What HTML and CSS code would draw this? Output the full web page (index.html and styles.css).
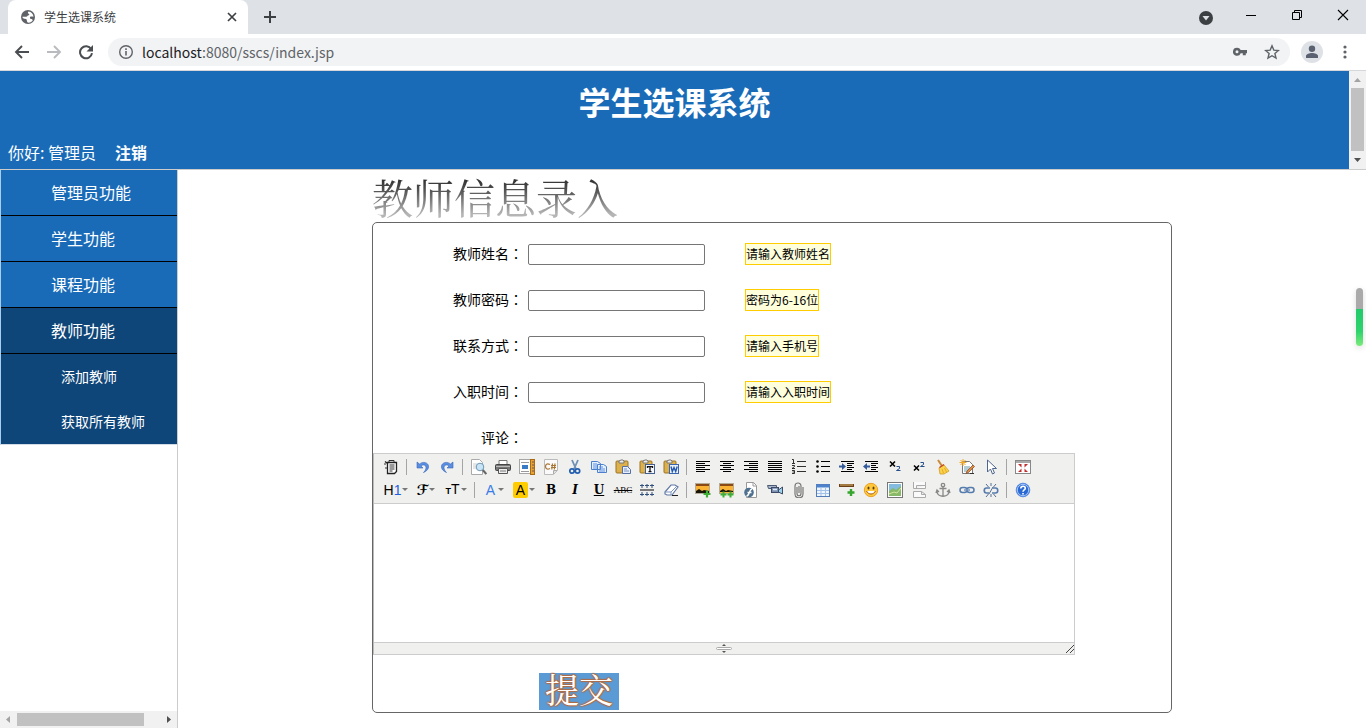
FILE: index.html
```html
<!DOCTYPE html>
<html lang="zh-CN">
<head>
<meta charset="utf-8">
<title>学生选课系统</title>
<link rel="stylesheet" href="styles.css">
</head>
<body>
<div class="tabstrip">
  <div class="tab">
    <svg class="i16" viewBox="0 0 16 16"><circle cx="8" cy="8" r="7" fill="#5f6368"/><path d="M8.500 2.500c-1 .8-.8 2 .3 2.300 1 .3.400 1.500-.8 1.700-.8.200-.6 1.300-1.700 1.300H2.400c0 1.500 1.500 2 2.600 2 1.300 0 1.900.8 1.900 1.900 0 1 .6 1.900 1.600 2 2-.1 3.300-1 4.300-2.500-.3-.9-1-1.200-1.900-1.200-1.300 0-1.200-2-.3-2.400.8-.3 1.900-.2 2.900.1-.2-2.700-2.200-4.900-5-5.200z" fill="#fff"/></svg>
    <span class="tab-title">学生选课系统</span>
    <button class="bare" aria-label="关闭标签页"><svg class="i16" viewBox="0 0 16 16"><path d="M4 4l8 8M12 4l-8 8" stroke="#3c4043" stroke-width="1.700"/></svg></button>
  </div>
  <button class="bare newtab" aria-label="新标签页"><svg class="i16" viewBox="0 0 16 16"><path d="M8 2v12M2 8h12" stroke="#3c4043" stroke-width="2"/></svg></button>
  <div class="winbtns">
    <button class="bare win" aria-label="搜索标签页"><svg class="i16" viewBox="0 0 16 16"><circle cx="9" cy="9" r="7" fill="#3c4043"/><path d="M5.500 7h7L9 11.500z" fill="#dee1e6"/></svg></button>
    <button class="bare win" aria-label="最小化"><svg class="i16" viewBox="0 0 16 16"><path d="M3 6.500h10" stroke="#000"/></svg></button>
    <button class="bare win" aria-label="还原"><svg class="i16" viewBox="0 0 16 16"><path d="M3.500 3.500h7v7h-7zM5.500 3.500v-2h7v7h-2" fill="none" stroke="#000"/></svg></button>
    <button class="bare win" aria-label="关闭"><svg class="i16" viewBox="0 0 16 16"><path d="M3 1l10 10M13 1L3 11" stroke="#000" stroke-width="1.100"/></svg></button>
  </div>
</div>
<div class="navbar">
  <button class="bare nav" aria-label="后退"><svg class="i16" viewBox="0 0 16 16"><path d="M15 8H2M8 2L2 8l6 6" fill="none" stroke="#4a4d51" stroke-width="1.900"/></svg></button>
  <button class="bare nav" aria-label="前进"><svg class="i16" viewBox="0 0 16 16"><path d="M1 8h13M8 2l6 6-6 6" fill="none" stroke="#b9bbbe" stroke-width="1.900"/></svg></button>
  <button class="bare nav" aria-label="刷新"><svg class="i16" viewBox="0 0 16 16"><path d="M13.200 5.200A6 6 0 1 0 14 9.200" fill="none" stroke="#4a4d51" stroke-width="2"/><path d="M15 1v6.500H8.500z" fill="#4a4d51"/></svg></button>
  <div class="omnibox">
    <svg class="i16" viewBox="0 0 16 16"><circle cx="8" cy="8" r="6.300" fill="none" stroke="#5f6368" stroke-width="1.400"/><path d="M8 7v4.500M8 4.300v1.600" stroke="#5f6368" stroke-width="1.600"/></svg>
    <div class="url"><span class="host">localhost</span>:8080/sscs/index.jsp</div>
    <svg class="i16" viewBox="0 0 16 16"><path fill-rule="evenodd" d="M5 3.800a4 4 0 1 0 3.700 5.400h2.100v2h3V9.200H15V6H8.700A4 4 0 0 0 5 3.800zM5 6.200a1.500 1.500 0 1 1 0 3 1.500 1.500 0 0 1 0-3z" fill="#5f6368"/></svg>
    <svg class="i16" viewBox="0 0 16 16"><path d="M8 1.800l1.800 4.300 4.600.4-3.500 3 1.100 4.600L8 11.700 4 14.100l1.100-4.600-3.500-3 4.600-.4z" fill="none" stroke="#5f6368" stroke-width="1.400"/></svg>
  </div>
  <button class="bare avatar" aria-label="用户"><svg class="i16" viewBox="0 0 16 16"><circle cx="8" cy="4.800" r="3.200" fill="#5a6170"/><path d="M2 14v-2c0-2 3.500-3 6-3s6 1 6 3v2z" fill="#5a6170"/></svg></button>
  <button class="bare" aria-label="菜单"><svg class="i16" viewBox="0 0 16 16"><g fill="#5f6368"><circle cx="8" cy="3" r="1.600"/><circle cx="8" cy="8" r="1.600"/><circle cx="8" cy="13" r="1.600"/></g></svg></button>
</div>

<div class="topframe">
  <header class="banner">
    <h1>学生选课系统</h1>
    <p>你好: 管理员<a href="#">注销</a></p>
  </header>
  <div class="vscroll">
    <svg class="arrow" viewBox="0 0 17 17"><path d="M5 11h7L8.500 7z" fill="#a3a3a3"/></svg>
    <div class="vthumb"></div>
    <svg class="arrow" viewBox="0 0 17 17"><path d="M5 7h7l-3.500 4z" fill="#505050"/></svg>
  </div>
</div>

<div class="frames">
  <aside class="side">
    <nav class="menu">
      <a href="#">管理员功能</a>
      <a href="#">学生功能</a>
      <a href="#">课程功能</a>
      <a href="#" class="open">教师功能</a>
      <a href="#" class="sub">添加教师</a>
      <a href="#" class="sub">获取所有教师</a>
    </nav>
    <div class="hscroll">
      <svg class="arrow" viewBox="0 0 17 17"><path d="M10 5v7L6 8.500z" fill="#a3a3a3"/></svg>
      <div class="hthumb"></div>
      <svg class="arrow" viewBox="0 0 17 17"><path d="M7 5v7l4-3.500z" fill="#505050"/></svg>
    </div>
  </aside>

  <main class="content">
    <form class="sheet">
      <h2>教师信息录入</h2>
      <div class="box">
        <div class="row"><label for="name">教师姓名<span class="colon" lang="zh-TW">：</span></label><input id="name" type="text"><span class="hint">请输入教师姓名</span></div>
        <div class="row"><label for="pwd">教师密码<span class="colon" lang="zh-TW">：</span></label><input id="pwd" type="password"><span class="hint">密码为6-16位</span></div>
        <div class="row"><label for="tel">联系方式<span class="colon" lang="zh-TW">：</span></label><input id="tel" type="text"><span class="hint">请输入手机号</span></div>
        <div class="row"><label for="date">入职时间<span class="colon" lang="zh-TW">：</span></label><input id="date" type="text"><span class="hint">请输入入职时间</span></div>
        <div class="row last"><label for="memo">评论<span class="colon" lang="zh-TW">：</span></label></div>

        <div class="editor">
          <div class="tools">
            <div class="toolrow">
              <button type="button" aria-label="HTML代码"><svg viewBox="0 0 16 16"><path d="M4.500 3.500h9v9l-2 2h-7zM2 2.500l2.500 2" fill="#fff" stroke="#222" stroke-width="1.300"/><path d="M6 3V1.500h5V3M6.500 6h5M6.500 8h5M6.500 10h5M6.500 12h3M2 4v2M3 8v2" stroke="#333" fill="none"/></svg></button>
              <i class="sep"></i>
              <button type="button" aria-label="后退"><svg viewBox="0 0 16 16"><path d="M2 3v6h6L6 7c2-2 5-1 5 1.500 0 2-1 3.500-2.500 5C12 12 14 9.500 13.500 7 13 3.500 8 2 4.500 5z" fill="#5b8ee0" stroke="#3568bb" stroke-width=".6"/></svg></button>
              <button type="button" aria-label="前进"><svg viewBox="0 0 16 16"><path d="M14 3v6H8l2-2C8 5 5 6 5 8.500c0 2 1 3.500 2.500 5C4 12 2 9.500 2.500 7 3 3.500 8 2 11.500 5z" fill="#5b8ee0" stroke="#3568bb" stroke-width=".6"/></svg></button>
              <i class="sep"></i>
              <button type="button" aria-label="预览"><svg viewBox="0 0 16 16"><path d="M.5.500h8l3 3v12H.5z" fill="#fff" stroke="#aaa"/><path d="M2 5h4M2 7h3M2 9h3" stroke="#ccc"/><circle cx="9" cy="8" r="3.800" fill="#c7e5f7" stroke="#7196b5"/><path d="M11.800 11l3.500 4" stroke="#666" stroke-width="2"/></svg></button>
              <button type="button" aria-label="打印"><svg viewBox="0 0 16 16"><path d="M4 6V1.500h8V6" fill="#fff" stroke="#777"/><rect x=".5" y="5.500" width="15" height="6" rx="1" fill="#777" stroke="#444"/><path d="M1 7.500h14" stroke="#bbb"/><path d="M3.500 9.500h9v5h-9z" fill="#eee" stroke="#555"/><path d="M5 12h6" stroke="#777"/></svg></button>
              <button type="button" aria-label="插入模板"><svg viewBox="0 0 16 16"><rect x=".5" y=".5" width="11" height="14" fill="#fff" stroke="#555" stroke-dasharray="1 1"/><path d="M2 3.500h8M2 12.500h8" stroke="#999"/><rect x="3" y="6" width="6" height="4" fill="#397bc5"/><rect x="11.500" y=".5" width="4" height="15" fill="#e9a333" stroke="#a86b14"/><path d="M13 3h2M13 6h2M13 9h2M13 12h2" stroke="#754"/></svg></button>
              <button type="button" aria-label="插入程序代码"><svg viewBox="0 0 16 16"><path d="M1.500.500h13v11l-4 4h-9z" fill="#fafafa" stroke="#bbb"/><path d="M14 11.500h-3.500V15" fill="#ddd" stroke="#aaa"/><path d="M7 5.500c-3-1.500-4.500 0-4.500 2s1.500 3.500 4.500 2M9.500 4.500l-.7 6M12 4.500l-.7 6M8 6.500h5M8 8.500h5" fill="none" stroke="#a97532" stroke-width="1.200"/></svg></button>
              <button type="button" aria-label="剪切"><svg viewBox="0 0 16 16"><path d="M5 1l4 9M11 1l-4 9" stroke="#6f8fb5" stroke-width="1.800"/><circle cx="5" cy="12" r="2.200" fill="none" stroke="#235fb0" stroke-width="1.700"/><circle cx="10.500" cy="12" r="2.200" fill="none" stroke="#235fb0" stroke-width="1.700"/></svg></button>
              <button type="button" aria-label="复制"><svg viewBox="0 0 16 16"><path d="M.5 2.500h6l3 2v6h-9zM6.500 5.500h6l3 2v6h-9z" fill="#e6f1ff" stroke="#4c7fcc"/><path d="M2 5h4M2 7h4M2 9h4M8 8h4M8 10h6M8 12h6" stroke="#5c8fe0"/></svg></button>
              <button type="button" aria-label="粘贴"><svg viewBox="0 0 16 16"><rect x="1" y="2" width="12" height="12" rx="1" fill="#dcb04c" stroke="#9b7327"/><path d="M4 4V2l2-1h2l1 1v2z" fill="#eee" stroke="#777"/><path d="M7.500 7.500h5l3 3v4h-8z" fill="#e7efff" stroke="#556fa5"/><path d="M9 10h3M9 12h5" stroke="#7891bc"/></svg></button>
              <button type="button" aria-label="粘贴为无格式文本"><svg viewBox="0 0 16 16"><rect x="1" y="2" width="12" height="12" rx="1" fill="#dcb04c" stroke="#9b7327"/><path d="M4 4V2l2-1h2l1 1v2z" fill="#eee" stroke="#777"/><rect x="6.500" y="5.500" width="9" height="9" fill="#f5f9ff" stroke="#445f91"/><path d="M8.500 9V7.700h5V9M11 8v5M9.500 12.700h3" fill="none" stroke="#111" stroke-width="1.300"/></svg></button>
              <button type="button" aria-label="从Word粘贴"><svg viewBox="0 0 16 16"><rect x="1" y="2" width="12" height="12" rx="1" fill="#dcb04c" stroke="#9b7327"/><path d="M4 4V2l2-1h2l1 1v2z" fill="#eee" stroke="#777"/><rect x="6.500" y="5.500" width="9" height="9" fill="#e9f2ff" stroke="#3c67ae"/><path d="M8 7.500l1.300 5L11 8.500l1.700 4L14.200 7.500" fill="none" stroke="#2257ad" stroke-width="1.400"/></svg></button>
              <i class="sep"></i>
              <button type="button" aria-label="左对齐"><svg viewBox="0 0 16 16"><path d="M1 2.500h14M1 4.500h9M1 6.500h14M1 8.500h9M1 10.500h14M1 12.500h9" stroke="#000"/></svg></button>
              <button type="button" aria-label="居中"><svg viewBox="0 0 16 16"><path d="M1 2.500h14M4 4.500h8M1 6.500h14M4 8.500h8M1 10.500h14M4 12.500h8" stroke="#000"/></svg></button>
              <button type="button" aria-label="右对齐"><svg viewBox="0 0 16 16"><path d="M1 2.500h14M6 4.500h9M1 6.500h14M6 8.500h9M1 10.500h14M6 12.500h9" stroke="#000"/></svg></button>
              <button type="button" aria-label="两端对齐"><svg viewBox="0 0 16 16"><path d="M1 2.500h14M1 4.500h14M1 6.500h14M1 8.500h14M1 10.500h14M1 12.500h14" stroke="#000"/></svg></button>
              <button type="button" aria-label="编号"><svg viewBox="0 0 16 16"><path d="M6 2.500h9M6 7.500h9M6 12.500h9M1 .5h1.500V4M1 4.500h3M1 6.500h2.500v1L1 9.500h3M1 11.500h2.500v3H1M1.500 13H3" fill="none" stroke="#000" stroke-width=".8"/></svg></button>
              <button type="button" aria-label="项目符号"><svg viewBox="0 0 16 16"><path d="M6 2.500h9M6 7.500h9M6 12.500h9" stroke="#000"/><circle cx="2.500" cy="2.500" r="1.300"/><circle cx="2.500" cy="7.500" r="1.300"/><circle cx="2.500" cy="12.500" r="1.300"/></svg></button>
              <button type="button" aria-label="增加缩进"><svg viewBox="0 0 16 16"><path d="M2 2.500h13M8 4.500h7M8 6.500h5M8 8.500h7M8 10.500h5M2 12.500h13" stroke="#000" stroke-width="1.200"/><path d="M0 6.500h3V4l4 3.500L3 11V8.500H0z" fill="#335b9c"/></svg></button>
              <button type="button" aria-label="减少缩进"><svg viewBox="0 0 16 16"><path d="M2 2.500h13M8 4.500h7M8 6.500h5M8 8.500h7M8 10.500h5M2 12.500h13" stroke="#000" stroke-width="1.200"/><path d="M7 6.500H4V4L0 7.500 4 11V8.500h3z" fill="#335b9c"/></svg></button>
              <button type="button" aria-label="下标"><svg viewBox="0 0 16 16"><path d="M3 2.500l5 5M8 2.500l-5 5" stroke="#000" stroke-width="1.600"/><path d="M9.500 7.500h3v2l-3 2h4" fill="none" stroke="#274f8c"/></svg></button>
              <button type="button" aria-label="上标"><svg viewBox="0 0 16 16"><path d="M3 6.500l5 5M8 6.500l-5 5" stroke="#000" stroke-width="1.600"/><path d="M9.500 3.500h3v2l-3 2h4" fill="none" stroke="#274f8c"/></svg></button>
              <button type="button" aria-label="清理HTML代码"><svg viewBox="0 0 16 16"><path d="M3 1l4 6" stroke="#c98a3a" stroke-width="2"/><path d="M4 9l5-3 5 6-5 3H5z" fill="#fbd348" stroke="#d39b25" stroke-width=".8"/><path d="M4.500 8.500l4.500-3" stroke="#c2451f" stroke-width="1.400"/><path d="M7 10l1.500 4M9.500 9l2 4" stroke="#d9a02a" stroke-width=".8"/></svg></button>
              <button type="button" aria-label="一键排版"><svg viewBox="0 0 16 16"><path d="M3.500 2.500h7l3 3v9h-10z" fill="#fff" stroke="#777"/><path d="M5 8h6M5 10h5M5 12h4" stroke="#69a"/><path d="M4 0v7M.5 3.500h7M1.500 1l5 5M6.500 1l-5 5" stroke="#f2a828"/><path d="M14 6l-6 6-1 2.500 2.500-1 6-6z" fill="#e48b38" stroke="#7b462e" stroke-width=".7"/><path d="M11 14.500h4" stroke="#333"/></svg></button>
              <button type="button" aria-label="全选"><svg viewBox="0 0 16 16"><path d="M4.500 1v12l3-3 2 5 2-1-2-4.500h4z" fill="#fff" stroke="#4e668e"/></svg></button>
              <i class="sep"></i>
              <button type="button" aria-label="全屏显示"><svg viewBox="0 0 16 16"><rect x=".5" y="1.500" width="15" height="13" fill="#fff" stroke="#888"/><path d="M1 3h14" stroke="#aaa" stroke-width="2"/><path d="M3 5h3.500v3.500zM13 5H9.500v3.500zM3 13h3.500V9.500zM13 13H9.500V9.500z" fill="#c12c2c"/></svg></button>
            </div>
            <div class="toolrow second">
              <button type="button" class="wide" aria-label="段落"><span class="h">H<b class="one">1</b></span><i class="caret"></i></button>
              <button type="button" class="wide" aria-label="字体"><span class="script">ℱ</span><i class="caret"></i></button>
              <button type="button" class="wide" aria-label="文字大小"><span class="tt"><small>T</small>T</span><i class="caret"></i></button>
              <i class="sep"></i>
              <button type="button" class="wide" aria-label="文字颜色"><span class="fore">A</span><i class="caret"></i></button>
              <button type="button" class="wide" aria-label="文字背景"><span class="back">A</span><i class="caret"></i></button>
              <button type="button" class="serif" aria-label="粗体"><b>B</b></button>
              <button type="button" class="serif" aria-label="斜体"><b><i>I</i></b></button>
              <button type="button" class="serif" aria-label="下划线"><b><u>U</u></b></button>
              <button type="button" class="strike" aria-label="删除线"><s>ABC</s></button>
              <button type="button" aria-label="行距"><svg viewBox="0 0 16 16"><path d="M1 8h14" stroke="#777" stroke-width="2"/><path d="M3 2v4M8 2v4M13 2v4M3 10v4M8 10v4M13 10v4M1 3.500h4M6 3.500h4M11 3.500h4M1 12.500h4M6 12.500h4M11 12.500h4" stroke="#31517c"/></svg></button>
              <button type="button" aria-label="删除格式"><svg viewBox="0 0 16 16"><path d="M2 10l6-7h4l3 2-6 8H4L2 12z" fill="#fff" stroke="#6179a5" stroke-width="1.200"/><path d="M2 10h6l6-6M8 10v3" fill="none" stroke="#7d95bd"/><path d="M9 13.500h6" stroke="#222"/></svg></button>
              <i class="sep"></i>
              <button type="button" aria-label="图片"><svg viewBox="0 0 16 16"><rect x=".5" y="1.500" width="14" height="10" fill="#f9b233" stroke="#b5ac98"/><path d="M1 2h13v2H1z" fill="#8a4a16"/><path d="M1 11V9l3-2 3 2 2-1 5 1v2z" fill="#181408"/><path d="M12 8.500v7M8.500 12h7" stroke="#3fae35" stroke-width="2.200"/></svg></button>
              <button type="button" aria-label="批量图片上传"><svg viewBox="0 0 16 16"><rect x=".5" y="1.500" width="14" height="10" fill="#f9b233" stroke="#b5ac98"/><path d="M1 2h13v2H1z" fill="#8a4a16"/><path d="M1 10V9l3-2 3 2 2-1 5 1v1z" fill="#181408"/><path d="M4.500 9.500v6M1.500 12.500h6M11.500 9.500v6M8.500 12.500h6" stroke="#3fae35" stroke-width="2"/></svg></button>
              <button type="button" aria-label="Flash"><svg viewBox="0 0 16 16"><path d="M3.500.500h7l3 3v12h-10z" fill="#fff" stroke="#999"/><path d="M10 .5V4h3" fill="none" stroke="#999"/><circle cx="6" cy="10.500" r="4.800" fill="#4e718f"/><path d="M9 7c-3 0-2 7-5.500 7M4.500 10.500h4" stroke="#fff" fill="none" stroke-width="1.400"/></svg></button>
              <button type="button" aria-label="视音频"><svg viewBox="0 0 16 16"><path d="M.5 3.500h9v3h-8z" fill="#a7b4c9" stroke="#4b5b75"/><rect x="4.500" y="5.500" width="7" height="5" fill="#7d90b0" stroke="#3c4c68"/><path d="M11.500 8l4-3v7l-4-2z" fill="#9bd3ec" stroke="#3c4c68"/><path d="M6 7.500h4" stroke="#dbe9ff" stroke-width="1.500"/></svg></button>
              <button type="button" aria-label="插入文件"><svg viewBox="0 0 16 16"><path d="M6 5v6.500c0 3 4 3 4 0V4c0-4-6-4-6 0v8c0 5 8 5 8 0V5M8 4v7" fill="none" stroke="#777" stroke-width="1.200"/></svg></button>
              <button type="button" aria-label="表格"><svg viewBox="0 0 16 16"><rect x="1.500" y="2.500" width="13" height="12" fill="#eef5ff" stroke="#537bb8"/><path d="M1 4h14" stroke="#4e82ca" stroke-width="3"/><path d="M2 8.500h12M2 11.500h12M6 5v9M10.500 5v9" stroke="#a5c0e5"/></svg></button>
              <button type="button" aria-label="插入横线"><svg viewBox="0 0 16 16"><path d="M0 3.500h15" stroke="#6a4218" stroke-width="3"/><path d="M1 3h13" stroke="#dfb370"/><path d="M12 7v7M8.500 10.500h7" stroke="#35a52d" stroke-width="2.400"/></svg></button>
              <button type="button" aria-label="插入表情"><svg viewBox="0 0 16 16"><circle cx="8" cy="8" r="6.700" fill="#ffc83a" stroke="#e9a12b"/><ellipse cx="5.500" cy="6" rx="1" ry="1.600" fill="#593c13"/><ellipse cx="10.500" cy="6" rx="1" ry="1.600" fill="#593c13"/><path d="M3.500 9c2 4 7 4 9 0" fill="#fff" stroke="#a45515"/></svg></button>
              <button type="button" aria-label="百度地图"><svg viewBox="0 0 16 16"><rect x=".5" y=".5" width="15" height="15" fill="#fff" stroke="#777"/><rect x="2" y="2" width="12" height="12" fill="#83bcdf"/><path d="M2 9l4-3 3 2 5-4v10H2z" fill="#87b969"/><path d="M2 12l5-2 3 1 4-5" fill="none" stroke="#d4e6a0"/></svg></button>
              <button type="button" aria-label="插入分页符"><svg viewBox="0 0 16 16"><path d="M2.500 0v6.500h12V0M5.500 6V3.500H14" fill="#fafafa" stroke="#aaa"/><path d="M2.500 15.500v-6h8l4 3v3zM10.500 9.500v3h4" fill="#fafafa" stroke="#aaa"/></svg></button>
              <button type="button" aria-label="锚点"><svg viewBox="0 0 16 16"><circle cx="8" cy="3" r="1.700" fill="none" stroke="#888" stroke-width="1.300"/><path d="M8 5v9M4.500 6.500h7M2 9c0 7 12 7 12 0M1 11l1-3 2 2M15 11l-1-3-2 2" fill="none" stroke="#888" stroke-width="1.300"/></svg></button>
              <button type="button" aria-label="超级链接"><svg viewBox="0 0 16 16"><rect x="1" y="5.500" width="7" height="5" rx="2.500" fill="none" stroke="#567bad" stroke-width="1.500"/><rect x="8" y="5.500" width="7" height="5" rx="2.500" fill="none" stroke="#567bad" stroke-width="1.500"/><path d="M5 8h6" stroke="#7394c0" stroke-width="1.500"/></svg></button>
              <button type="button" aria-label="取消超级链接"><svg viewBox="0 0 16 16"><path d="M7 6H3.500c-3 0-3 5 0 5H6M9.500 6h3c3 0 3 5 0 5H9" fill="none" stroke="#567bad" stroke-width="1.600"/><path d="M8 1v3M3 2l2.500 3M13 2l-2.500 3M8 12v3M3 15l2.500-3M13 15l-2.500-3M10 5l-4 7" stroke="#556f91"/></svg></button>
              <i class="sep"></i>
              <button type="button" aria-label="关于"><svg viewBox="0 0 16 16"><circle cx="8" cy="8" r="6.800" fill="#2b69d2" stroke="#5a8be0"/><circle cx="8" cy="8" r="5.700" fill="none" stroke="#a6c8fb"/><path d="M5.800 6.500c0-3 4.500-3 4.500-.3C10.300 8 8 7.700 8 9.700M8 11v1.500" fill="none" stroke="#fff" stroke-width="1.600"/></svg></button>
            </div>
          </div>
          <textarea id="memo"></textarea>
          <div class="status">
            <span></span>
            <svg class="grip" viewBox="0 0 16 11"><path d="M8 1l2 2H6zM8 10l2-2H6z" fill="#555"/><rect x=".5" y="4.500" width="15" height="2" rx="1" fill="#fff" stroke="#aaa"/></svg>
            <svg class="corner" viewBox="0 0 10 11"><path d="M2 10l8-8M6 10l4-4" stroke="#444"/></svg>
          </div>
        </div>
        <button type="submit" class="submit">提交</button>
      </div>
    </form>
    <div class="meter"></div>
  </main>
</div>
</body>
</html>
```
FILE: styles.css
```css
* { box-sizing: border-box; }
body {
  margin: 0;
  height: 100vh;
  display: flex;
  flex-direction: column;
  overflow: hidden;
  background: #fff;
  font-family: "Noto Sans CJK SC", sans-serif;
  color: #000;
}
svg { display: block; }
.i16 { width: 16px; height: 16px; flex: none; }
.bare { border: 0; padding: 0; background: none; display: flex; align-items: center; justify-content: center; }

.tabstrip { display: flex; align-items: center; height: 34px; background: #dee1e6; padding-left: 8px; flex: none; }
.tab { display: flex; align-items: center; width: 240px; height: 34px; padding: 0 8px 0 12px; background: #fff; border-radius: 8px 8px 0 0; }
.tab-title { flex: 1; padding-left: 8px; font-size: 12px; line-height: 16px; color: #3c4043; }
.newtab { padding: 0 14px; }
.winbtns { display: flex; margin-left: auto; height: 30px; }
.win { width: 46px; }

.navbar { display: flex; align-items: center; height: 37px; flex: none; padding: 0 13px 0 14px; background: #fff; border-bottom: 1px solid #d5d7da; }
.nav { width: 16px; margin-right: 16px; }
.omnibox { flex: 1; display: flex; align-items: center; gap: 16px; height: 28px; margin-right: 11px; margin-left: -2px; padding: 0 10px; border-radius: 14px; background: #f1f3f4; }
.url { flex: 1; margin-left: -8px; font-size: 14px; line-height: 20px; color: #5f6368; }
.host { color: #202124; }
.avatar { width: 22px; height: 22px; margin-right: 14px; border-radius: 50%; background: #dee1e6; }

.topframe { display: flex; flex: none; border-bottom: 1px solid #ccc; }
.banner { flex: 1; height: 98px; background: #1a6bb7; color: #fff; }
.banner h1 { margin: 0; padding-top: 6px; text-align: center; font-size: 32px; line-height: 48px; }
.banner p { margin: 0; padding: 15px 8px 0; font-size: 16px; line-height: 24px; }
.banner a { margin-left: 19px; color: #fff; font-weight: bold; text-decoration: none; }
.vscroll { display: flex; flex-direction: column; width: 17px; background: #f1f1f1; }
.arrow { width: 17px; height: 17px; flex: none; }
.vthumb { height: 63px; margin: 0 2px; background: #c1c1c1; }

.frames { display: flex; flex: 1; min-height: 0; }
.side { display: flex; flex-direction: column; justify-content: space-between; width: 178px; flex: none; border-right: 1px solid #ccc; }
.menu { border-left: 1px solid #a9cdee; border-bottom: 1px solid #d3dce6; background: #0f4679; }
.menu a { display: block; height: 46px; padding-left: 50px; border-bottom: 1px solid #000; background: #1a6bb7; color: #fff; font-size: 16px; line-height: 44px; text-decoration: none; }
.menu .open { background: #0f4679; }
.menu .sub { height: 45px; padding-left: 60px; border: 0; background: #0f4679; font-size: 14px; }
.hscroll { display: flex; align-items: center; height: 17px; background: #f1f1f1; }
.hthumb { width: 127px; height: 13px; background: #c1c1c1; }
.hscroll .arrow:last-child { margin-left: auto; }

.content { position: relative; flex: 1; }
.sheet { width: 800px; margin: 0 auto; }
.sheet h2 {
  margin: 0;
  height: 52px;
  width: max-content;
  font-family: "Liberation Serif", "Noto Serif CJK SC", "Noto Sans CJK SC", serif;
  font-size: 41px;
  font-weight: 400;
  line-height: 60px;
  color: transparent;
  background: linear-gradient(#333 20%, #555 40%, #b5b5b5 85%);
  background-clip: text;
  -webkit-background-clip: text;
}
.box { padding: 8px 0 2px; border: 1px solid #666; border-radius: 5px; }
.row { display: flex; align-items: center; height: 46px; }
.row label { width: 155px; padding: 0 5px 2px 0; text-align: right; font-size: 14px; line-height: 20px; }
.row.last { height: 38px; padding-top: 8px; }
.colon { font-family: "Noto Sans CJK TC", sans-serif; }
.row input { width: 177px; height: 21px; padding: 1px 2px; border: 1px solid #767676; border-radius: 2px; background: #fff; }
.hint { margin-left: 40px; border: 1px solid #fc0; background: #ffffdc; font-size: 12px; line-height: 20px; }

.editor { width: 702px; border: 1px solid #ccc; border-left-color: #bbb; }
.tools { padding: 1px 5px 2px; background: #f0f0ee; border-bottom: 1px solid #ccc; }
.toolrow { display: flex; height: 23px; }
.toolrow.second { padding-left: 2px; }
.toolrow button { display: flex; align-items: center; justify-content: center; width: 24px; padding: 0; border: 0; background: none; color: #000; }
.toolrow svg { width: 16px; height: 16px; }
.toolrow .wide { width: 30px; gap: 1px; font-family: "Liberation Sans", sans-serif; font-size: 14px; line-height: 16px; }
.sep { width: 1px; height: 16px; margin: 4px 4px 0 3px; background: #a5a5a5; }
.caret { border: 3px solid transparent; border-top-color: #777; border-bottom: 0; }
.one { font-weight: normal; color: #1f5fe0; }
.toolrow .script { font-family: "DejaVu Serif", "DejaVu Sans", serif; font-weight: bold; }
.tt small { font-size: 9px; font-weight: bold; }
.fore { padding: 0 2px; color: #3a7be8; }
.back { width: 15px; border-radius: 2px; background: #fc0; }
.toolrow .serif { font-family: "DejaVu Serif", serif; font-size: 12px; }
.toolrow .strike { font-family: "Liberation Serif", serif; font-size: 9px; }
textarea { display: block; width: 100%; height: 138px; padding: 4px; border: 0; resize: none; outline: 0; }
.status { display: flex; justify-content: space-between; height: 12px; border-top: 1px solid #ccc; background: #f0f0ee; }
.status span, .corner { width: 10px; height: 11px; }
.grip { width: 16px; height: 11px; }
.submit {
  display: block;
  width: 80px;
  height: 37px;
  margin: 18px 0 0 166px;
  padding: 0;
  border: 0;
  background: #5b9bd5;
  color: #fff;
  font-family: "Liberation Serif", "Noto Serif CJK SC", "Noto Sans CJK SC", serif;
  font-size: 34px;
  font-weight: 400;
  line-height: 37px;
  text-shadow: 1px 0 1px #b5693c, -1px 0 1px #b5693c, 0 1px 1px #b5693c, 0 -1px 1px #b5693c, 0 0 2px #b5693c;
}
.meter { position: absolute; top: 118px; right: 3px; width: 7px; height: 58px; border-radius: 4px; background: linear-gradient(#aaa 36%, #23ca6b 36%, #2fd36e 75%, #7bea7b); box-shadow: 0 2px 6px #ddd; }
```
